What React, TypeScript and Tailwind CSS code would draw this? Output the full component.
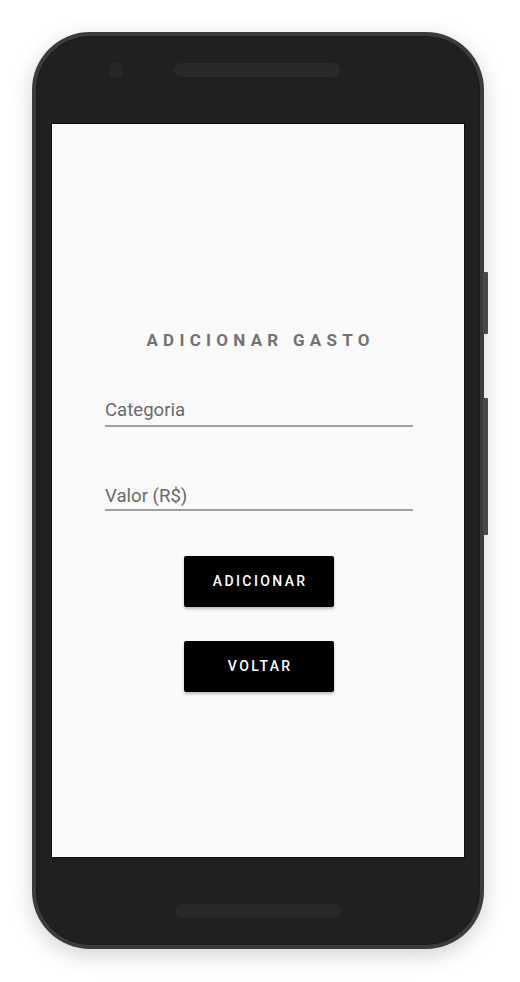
import React from "react";

export default function App() {
  return (
    <div className="w-[520px] h-[982px] bg-white pt-[32px] pl-[32px]" style={{ fontFamily: "Roboto, 'Noto Sans', sans-serif" }}>
      <div className="relative w-[452px] h-[917px] rounded-[58px] bg-[#3b3b3b] p-[4px] shadow-[0_6px_22px_rgba(0,0,0,0.18)]">
        {/* side buttons */}
        <div className="absolute right-[-4px] top-[240px] w-[5px] h-[62px] bg-[#484848] rounded-r-[1px]" />
        <div className="absolute right-[-4px] top-[366px] w-[5px] h-[137px] bg-[#484848] rounded-r-[1px]" />
        <div className="w-full h-full rounded-[54px] border border-[#1a1a1a] bg-[#202020] flex flex-col">
          <div className="h-[87px] flex items-start pt-[25px]">
            <div className="ml-[71px] w-[16px] h-[16px] rounded-full bg-[#272727]" />
            <div className="ml-[50px] mt-[1px] w-[166px] h-[14px] rounded-full bg-[#292929]" />
          </div>
          <div className="mx-auto w-[412px] h-[733px] bg-[#fafafa] shadow-[0_0_0_1px_#0d0d0d] flex flex-col items-center">
            <div className="mt-[205px] h-[22px] leading-[22px] text-[17px] font-bold tracking-[0.31em] pl-[0.31em] text-[#727272]">
              ADICIONAR GASTO
            </div>
            <div className="mt-[47px] ml-[2px] w-[308px] border-b-2 border-[#a0a0a0] pb-[3px]">
              <div className="h-[24px] leading-[24px] text-[18.6px] text-[#6b6b6b]">Categoria</div>
            </div>
            <div className="mt-[57px] ml-[2px] w-[308px] border-b-2 border-[#a0a0a0] pb-[1px]">
              <div className="h-[24px] leading-[24px] text-[18.6px] text-[#6b6b6b]">Valor (R$)</div>
            </div>
            <div className="mt-[45px] ml-[2px] w-[150px] h-[51px] bg-black rounded-[2px] shadow-[0_2px_3px_rgba(0,0,0,0.25)] flex items-center justify-center text-white text-[14px] font-medium tracking-[0.17em] pl-[0.17em]">
              ADICIONAR
            </div>
            <div className="mt-[34px] ml-[2px] w-[150px] h-[51px] bg-black rounded-[2px] shadow-[0_2px_3px_rgba(0,0,0,0.25)] flex items-center justify-center text-white text-[14px] font-medium tracking-[0.17em] pl-[0.17em]">
              VOLTAR
            </div>
          </div>
          <div className="flex-1 flex justify-center pt-[47px]">
            <div className="w-[166px] h-[14px] rounded-full bg-[#292929]" />
          </div>
        </div>
      </div>
    </div>
  );
}
